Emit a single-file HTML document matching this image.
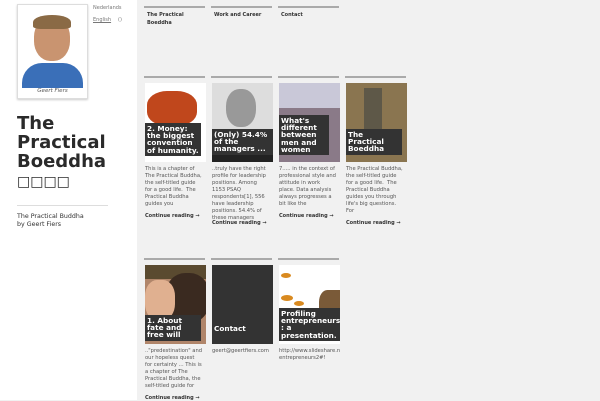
<!DOCTYPE html>
<html><head><meta charset="utf-8"><style>
*{margin:0;padding:0;box-sizing:border-box}
body{width:600px;height:400px;overflow:hidden;background:#f1f1f1;font-family:"DejaVu Sans","Liberation Sans",sans-serif;color:#444;position:relative}
.side{position:absolute;left:0;top:0;width:137px;height:400px;background:#fff}
.a{position:absolute}
.line{position:absolute;height:2px;background:#aaa;width:61px}
.nav{position:absolute;font-size:5px;font-weight:bold;color:#333;line-height:7.5px;width:58px}
.img{position:absolute;width:61px;height:79px;overflow:hidden}
.cap{position:absolute;left:0;background:#333;color:#fff;font-weight:bold;font-size:7.3px;line-height:7.2px;padding:2px 2px}
.txt{position:absolute;font-size:5.2px;line-height:7px;color:#555;width:58px}
.cr{position:absolute;font-size:5px;font-weight:bold;color:#333}
</style></head><body>
<div class="side"></div>
<div class="a" style="left:17px;top:4px;width:71px;height:95px;background:#fff;border:1px solid #ddd;box-shadow:0 1px 2px #ccc">
 <div style="position:absolute;left:4px;top:4px;width:61px;height:79px;background:#fff;overflow:hidden">
  <div style="position:absolute;left:12px;top:8px;width:36px;height:44px;border-radius:45%;background:#c99470"></div>
  <div style="position:absolute;left:11px;top:6px;width:38px;height:14px;border-radius:50% 50% 20% 20%;background:#8a6a45"></div>
  <div style="position:absolute;left:0;top:54px;width:61px;height:25px;border-radius:20px 20px 0 0;background:#3a6fb8"></div>
 </div>
 <div style="position:absolute;left:0;top:83px;width:69px;text-align:center;font-size:5.5px;font-style:italic;color:#555">Geert Fiers</div>
</div>
<div class="a" style="left:93px;top:5px;font-size:5px;color:#777">Nederlands</div>
<div class="a" style="left:93px;top:17px;font-size:5px;color:#777;text-decoration:underline">English</div>
<div class="a" style="left:118px;top:17px;font-size:5px;color:#777">()</div>
<div class="a" style="left:17px;top:114px;font-size:18px;font-weight:bold;line-height:19px;color:#2a2a2a">The<br>Practical<br>Boeddha<br><span style="font-weight:normal;font-size:14px">□□□□</span></div>
<div class="a" style="left:17px;top:205px;width:91px;height:1px;background:#ddd"></div>
<div class="a" style="left:17px;top:213px;font-size:6.3px;line-height:7.5px;color:#333">The Practical Buddha<br>by Geert Fiers</div>

<div class="line" style="left:144px;top:6px"></div>
<div class="line" style="left:211px;top:6px"></div>
<div class="line" style="left:278px;top:6px"></div>
<div class="nav" style="left:147px;top:12px">The Practical<br>Boeddha</div>
<div class="nav" style="left:214px;top:12px">Work and Career</div>
<div class="nav" style="left:281px;top:12px">Contact</div>

<div class="line" style="left:144px;top:76px"></div>
<div class="line" style="left:211px;top:76px"></div>
<div class="line" style="left:278px;top:76px"></div>
<div class="line" style="left:345px;top:76px"></div>

<div class="img" style="left:145px;top:83px;background:#fff">
 <div style="position:absolute;left:2px;top:8px;width:50px;height:35px;border-radius:40%;background:#c0471c"></div>
 <div class="cap" style="top:40px;width:56px">2. Money: the biggest convention of humanity.</div>
</div>
<div class="img" style="left:212px;top:83px;background:#ddd">
 <div style="position:absolute;left:14px;top:6px;width:30px;height:38px;border-radius:45%;background:#999"></div>
 <div style="position:absolute;left:0;top:52px;width:61px;height:27px;background:#222"></div>
 <div class="cap" style="top:46px;width:61px">(Only) 54.4% of the managers ...</div>
</div>
<div class="img" style="left:279px;top:83px;background:#8a7a88">
 <div style="position:absolute;left:0;top:0;width:61px;height:25px;background:#c9c8d8"></div>
 <div class="cap" style="top:32px;width:50px">What's different between men and women</div>
</div>
<div class="img" style="left:346px;top:83px;background:#8a7550">
 <div style="position:absolute;left:18px;top:5px;width:18px;height:60px;background:#5e5848"></div>
 <div class="cap" style="top:46px;width:56px">The Practical Boeddha</div>
</div>

<div class="txt" style="left:145px;top:166px">This is a chapter of The Practical Buddha, the self-titled guide for a good life.&nbsp; The Practical Buddha guides you</div>
<div class="txt" style="left:212px;top:166px">..truly have the right profile for leadership positions. Among 1153 PSAQ respondents[1], 556 have leadership positions. 54.4% of these managers</div>
<div class="txt" style="left:279px;top:166px">7..... in the context of professional style and attitude in work place. Data analysis always progresses a bit like the</div>
<div class="txt" style="left:346px;top:166px">The Practical Buddha, the self-titled guide for a good life.&nbsp; The Practical Buddha guides you through life's big questions. For</div>
<div class="cr" style="left:145px;top:213px">Continue reading →</div>
<div class="cr" style="left:212px;top:220px">Continue reading →</div>
<div class="cr" style="left:279px;top:213px">Continue reading →</div>
<div class="cr" style="left:346px;top:220px">Continue reading →</div>

<div class="line" style="left:144px;top:258px"></div>
<div class="line" style="left:211px;top:258px"></div>
<div class="line" style="left:278px;top:258px"></div>

<div class="img" style="left:145px;top:265px;background:#b0856a">
 <div style="position:absolute;left:0;top:0;width:61px;height:14px;background:#5a4a30"></div>
 <div style="position:absolute;left:20px;top:8px;width:45px;height:50px;border-radius:45%;background:#3a2a20"></div>
 <div style="position:absolute;left:0;top:15px;width:30px;height:40px;border-radius:40%;background:#e0b090"></div>
 <div class="cap" style="top:50px;width:56px">1. About fate and free will</div>
</div>
<div class="img" style="left:212px;top:265px;background:#333">
 <div class="cap" style="top:58px;width:40px">Contact</div>
</div>
<div class="img" style="left:279px;top:265px;background:#fff">
 <div style="position:absolute;left:2px;top:8px;width:10px;height:5px;border-radius:50%;background:#d98a20"></div>
 <div style="position:absolute;left:2px;top:30px;width:12px;height:6px;border-radius:50%;background:#d98a20"></div>
 <div style="position:absolute;left:15px;top:36px;width:10px;height:5px;border-radius:50%;background:#d98a20"></div>
 <div style="position:absolute;left:40px;top:25px;width:21px;height:30px;border-radius:40% 0 0 0;background:#7a5a38"></div>
 <div class="cap" style="top:43px;width:61px">Profiling entrepreneurs : a presentation.</div>
</div>

<div class="txt" style="left:145px;top:348px">.."predestination" and our hopeless quest for certainty ... This is a chapter of The Practical Buddha, the self-titled guide for</div>
<div class="txt" style="left:212px;top:348px">geert@geertfiers.com</div>
<div class="txt" style="left:279px;top:348px;overflow:hidden;width:61px;white-space:nowrap">http://www.slideshare.net<br>entrepreneurs2#!</div>
<div class="cr" style="left:145px;top:395px">Continue reading →</div>
</body></html>
